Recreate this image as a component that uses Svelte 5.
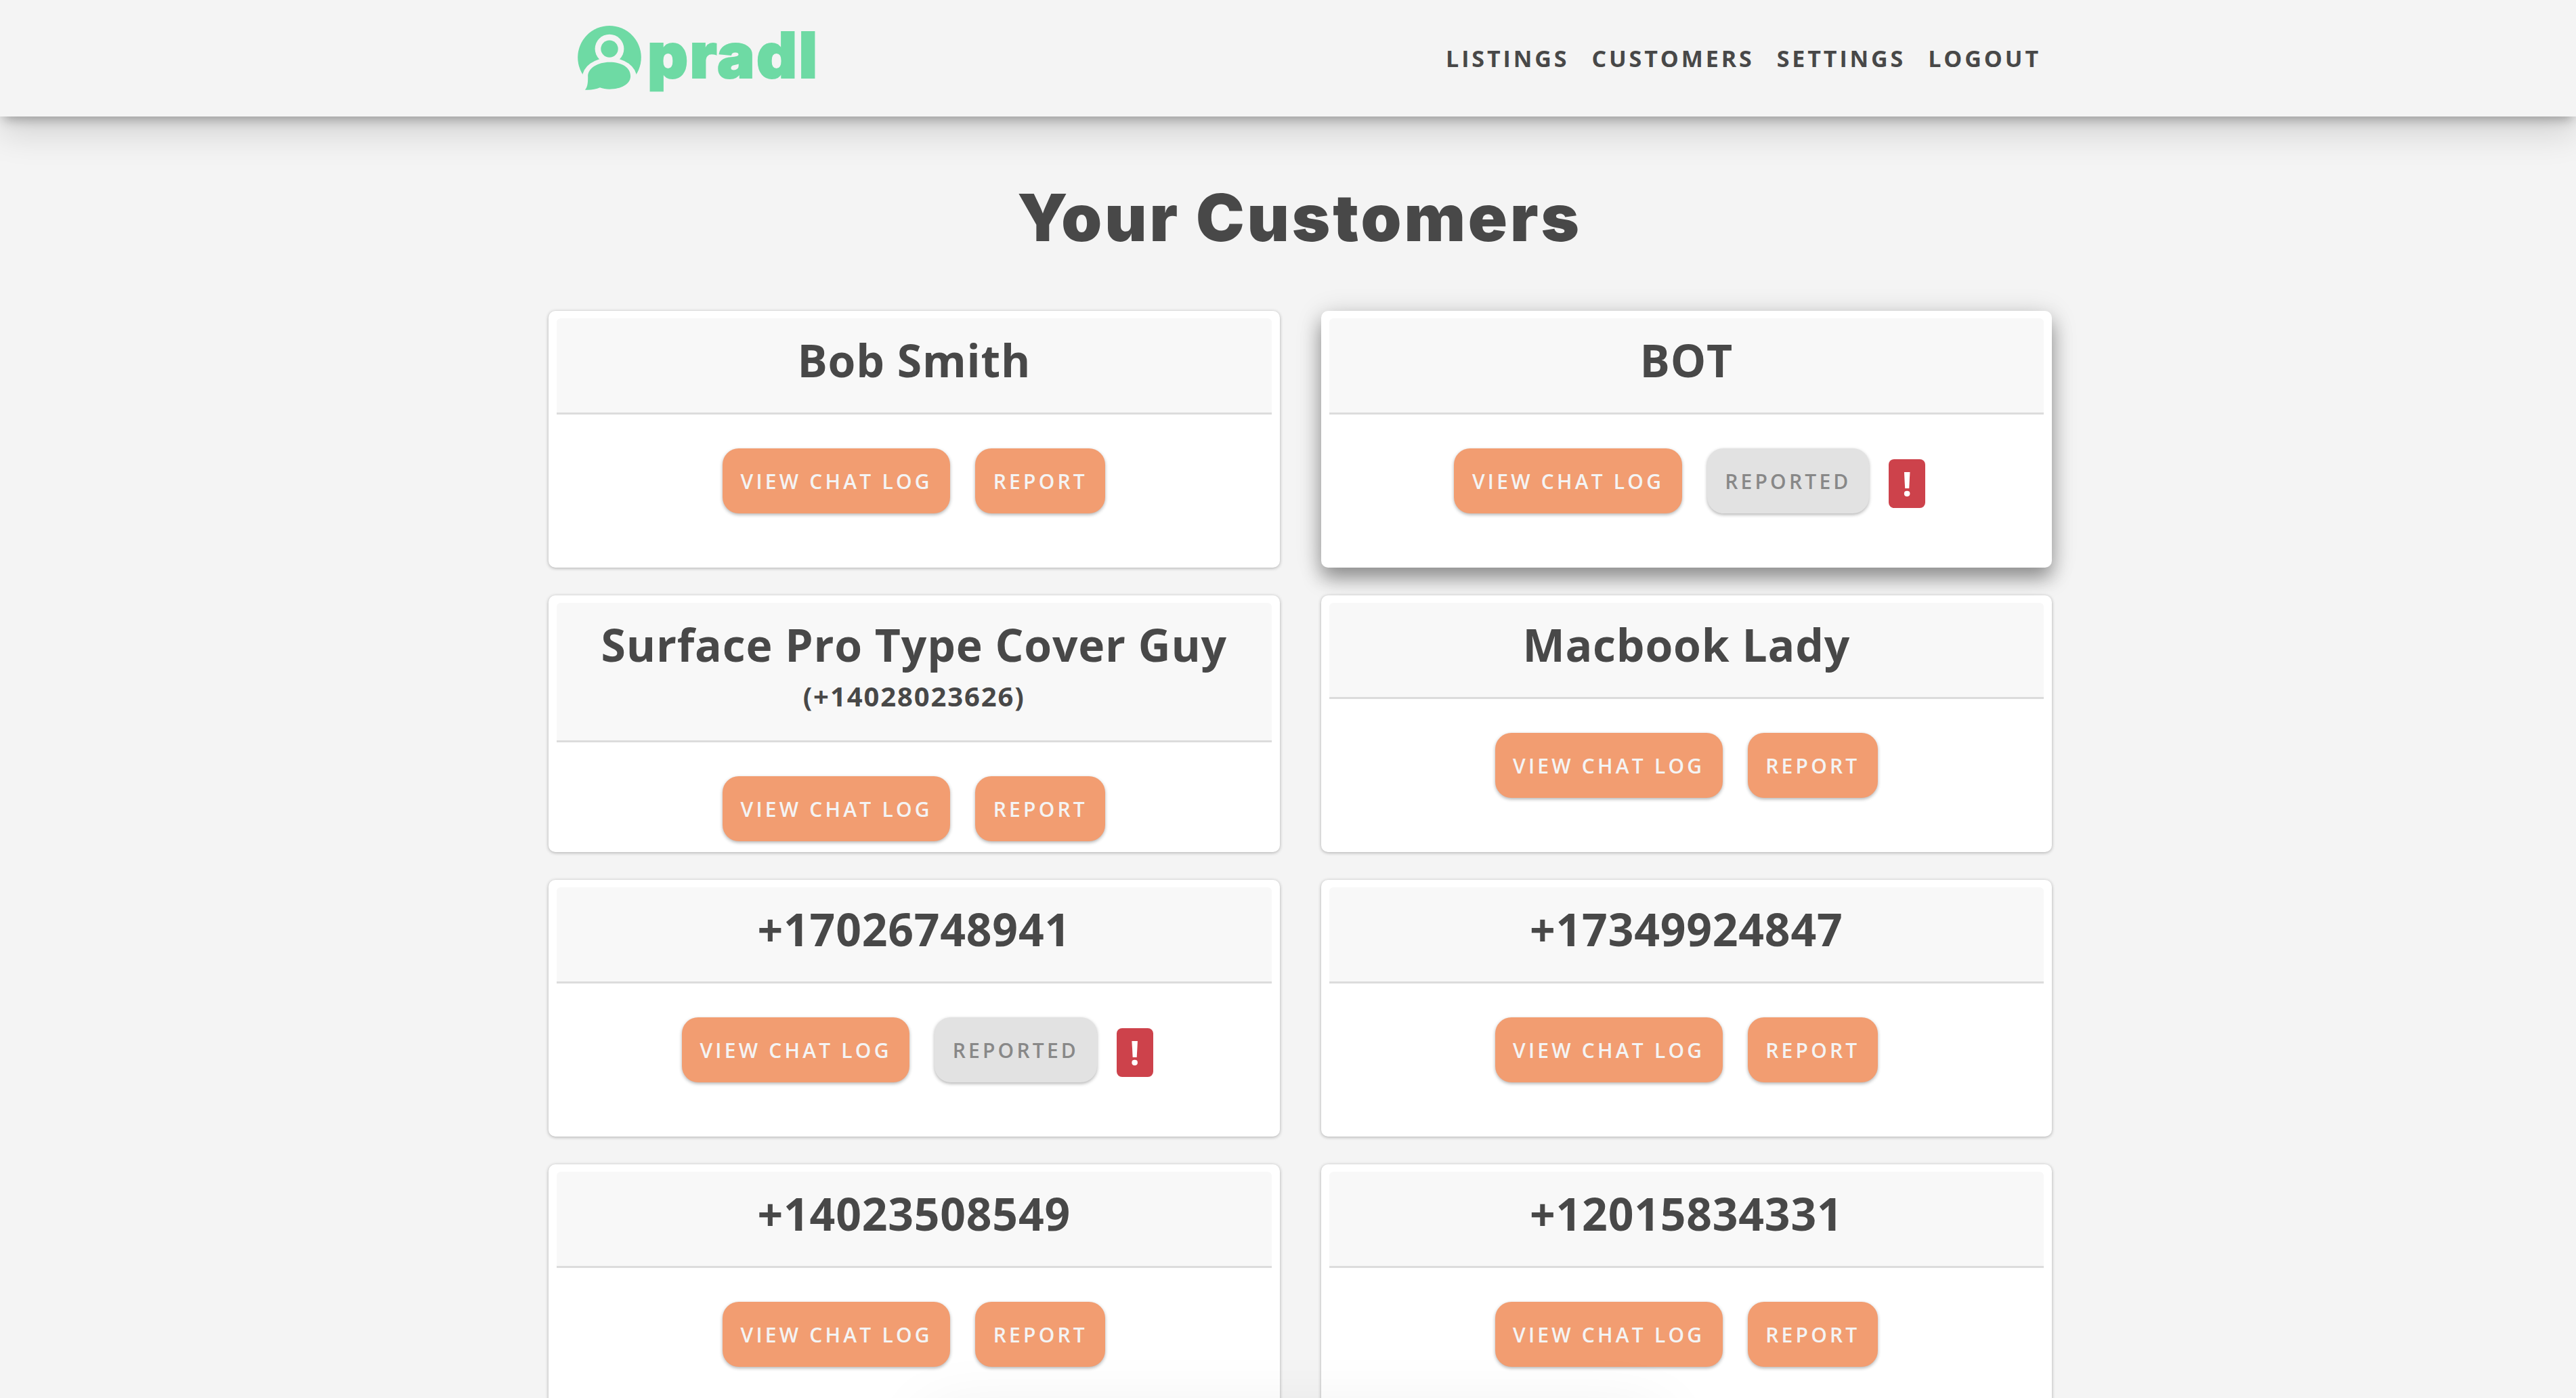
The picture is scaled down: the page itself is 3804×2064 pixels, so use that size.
<script>
  const links = ['Listings', 'Customers', 'Settings', 'Logout'];
  const customers = [
    { name: 'Bob Smith' },
    { name: 'BOT', reported: true, raised: true },
    { name: 'Surface Pro Type Cover Guy', phone: '(+14028023626)' },
    { name: 'Macbook Lady' },
    { name: '+17026748941', reported: true },
    { name: '+17349924847' },
    { name: '+14023508549' },
    { name: '+12015834331' }
  ];
</script>

<header class="topbar">
  <div class="topbar-inner">
    <a class="logo" href="#top">
      <svg class="logo-mark" viewBox="220 113 280 287" aria-hidden="true">
        <circle cx="360" cy="253" r="140" fill="#6edaa4" />
        <circle cx="360" cy="215" r="64" fill="#f4f4f4" />
        <circle cx="360" cy="215" r="38" fill="#6edaa4" />
        <ellipse cx="360" cy="342" rx="120" ry="88" fill="#f4f4f4" />
        <path
          d="M265 340 C262 300 310 274 360 274 C415 274 453 298 453 335 C453 372 410 393 360 393 C345 393 330 390 318 386 C300 394 275 398 252 396 C262 385 265 370 265 340 Z"
          fill="#6edaa4"
        />
      </svg>
      <span class="wordmark">pradl</span>
    </a>
    <nav>
      {#each links as link}
        <a href="#top">{link}</a>
      {/each}
    </nav>
  </div>
</header>

<main>
  <h1>Your Customers</h1>
  <div class="grid">
    {#each customers as c}
      <section class="card" class:raised={c.raised}>
        <div class="card-head">
          <h2>{c.name}</h2>
          {#if c.phone}
            <p class="phone">{c.phone}</p>
          {/if}
        </div>
        <div class="actions" class:flagged={c.reported}>
          <button class="btn">View chat log</button>
          {#if c.reported}
            <button class="btn done">Reported</button>
            <span class="alert">!</span>
          {:else}
            <button class="btn">Report</button>
          {/if}
        </div>
      </section>
    {/each}
  </div>
</main>

<div class="sheet"></div>

<style>
  :global(html) {
    overflow: hidden;
  }

  :global(body) {
    background: #f4f4f4;
    color: #484848;
    font-family: "Open Sans", "Liberation Sans", sans-serif;
    height: 2064px;
    overflow: hidden;
  }

  .topbar {
    height: 172px;
    background: #f4f4f4;
    box-shadow: 0 24px 48px rgba(0, 0, 0, 0.14), 0 10px 16px -6px rgba(0, 0, 0, 0.3);
    position: relative;
    z-index: 2;
  }

  .topbar-inner {
    display: flex;
    align-items: center;
    justify-content: space-between;
    height: 100%;
    box-sizing: border-box;
    padding: 0 790px 0 853px;
  }

  .logo {
    display: flex;
    align-items: center;
    gap: 9px;
    text-decoration: none;
  }

  .logo-mark {
    width: 94px;
    height: 96px;
  }

  .wordmark {
    font-family: Inter, "Liberation Sans", sans-serif;
    font-size: 93px;
    font-weight: 900;
    line-height: 96px;
    letter-spacing: 2.5px;
    color: #6edaa4;
    -webkit-text-stroke: 2px #6edaa4;
    margin-top: -10px;
  }

  nav {
    display: flex;
    gap: 33px;
  }

  nav a {
    color: #484848;
    font-size: 34px;
    font-weight: 700;
    letter-spacing: 3.9px;
    text-transform: uppercase;
    text-decoration: none;
  }

  main {
    width: 2220px;
    margin: 0 auto;
    padding-left: 36px;
  }

  h1 {
    margin: 0 0 0 -2px;
    padding-top: 80px;
    height: 287px;
    box-sizing: border-box;
    font-family: Inter, "Liberation Sans", sans-serif;
    font-size: 96px;
    font-weight: 900;
    line-height: 138px;
    letter-spacing: 3.9px;
    text-align: center;
    color: #484848;
  }

  .grid {
    display: grid;
    grid-template-columns: 1fr 1fr;
    grid-auto-rows: 379px;
    column-gap: 61px;
    row-gap: 41px;
  }

  .card {
    background: #fff;
    border-radius: 10px;
    padding: 11px 12px 0;
    box-shadow: 0 1px 5px rgba(0, 0, 0, 0.3);
    overflow: hidden;
    box-sizing: border-box;
  }

  .card.raised {
    overflow: visible;
    box-shadow: 0 16px 28px rgba(0, 0, 0, 0.36), 0 4px 40px rgba(0, 0, 0, 0.14);
  }

  .card-head {
    background: #f8f8f8;
    border-bottom: 3px solid #dcdcdc;
    border-radius: 6px 6px 0 0;
    text-align: center;
    padding: 16px 0 33px;
  }

  h2 {
    margin: 0;
    font-size: 66px;
    font-weight: 700;
    line-height: 90px;
    letter-spacing: 0.8px;
    color: #484848;
  }

  .phone {
    margin: 0;
    font-size: 40px;
    font-weight: 700;
    line-height: 64px;
    letter-spacing: 1.9px;
  }

  .actions {
    display: flex;
    justify-content: center;
    align-items: flex-start;
    gap: 37px;
    padding-top: 50px;
  }

  .actions.flagged {
    padding-left: 10px;
  }

  .btn {
    height: 96px;
    padding: 0 26.5px;
    border: 0;
    border-radius: 24px;
    background: #f29d71;
    color: #f4f4f4;
    font-family: inherit;
    font-size: 30px;
    font-weight: 600;
    letter-spacing: 4.2px;
    text-transform: uppercase;
    white-space: nowrap;
    box-shadow: 0 2px 5px rgba(0, 0, 0, 0.3);
  }

  .btn.done {
    background: #e2e2e2;
    color: #888;
  }

  .alert {
    width: 54px;
    height: 72px;
    margin: 16px 0 0 -8px;
    border-radius: 8px;
    background: #cd424b;
    color: #fff;
    font-size: 50px;
    font-weight: 700;
    line-height: 72px;
    text-align: center;
  }

  .sheet {
    position: fixed;
    left: 1370px;
    top: 2094px;
    width: 1080px;
    height: 60px;
    box-shadow: 0 0 100px rgba(0, 0, 0, 0.1);
    z-index: 3;
  }
</style>
